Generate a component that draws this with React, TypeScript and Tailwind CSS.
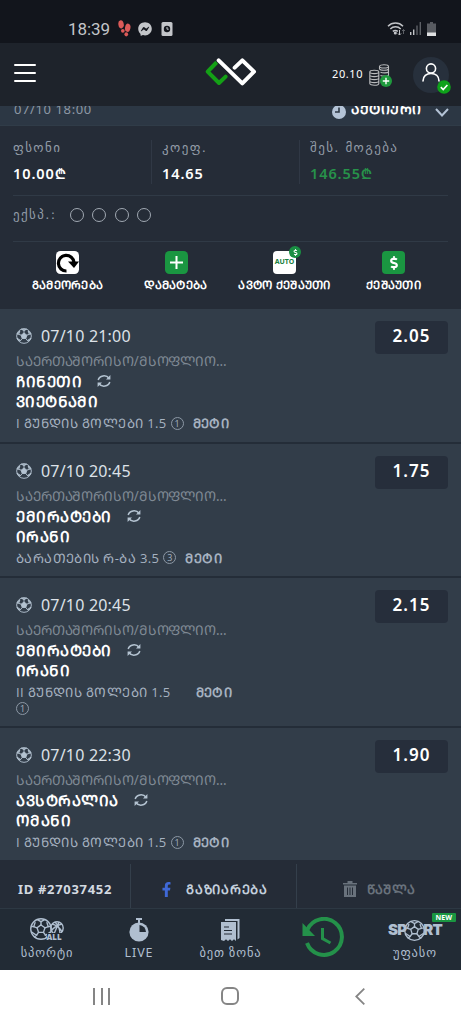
import type { ReactNode } from 'react';
import { FaFacebookF, FaFacebookMessenger, FaDollarSign } from 'react-icons/fa';

type Bet = {
  time: string;
  home: string;
  away: string;
  market: string;
  mark: string;
  odds: string;
  wrap?: boolean;
};

// text-transform leaves Georgian alone, so Mtavruli capitals are made here
const caps = (text: string) => text.toUpperCase();

const LEAGUE = 'საერთაშორისო/მსოფლიო...';

const bets: Bet[] = [
  { time: '07/10 21:00', home: 'ჩინეთი', away: 'ვიეტნამი', market: 'I გუნდის გოლები 1.5', mark: '1', odds: '2.05' },
  { time: '07/10 20:45', home: 'ემირატები', away: 'ირანი', market: 'ბარათების რ-ბა 3.5', mark: '3', odds: '1.75' },
  { time: '07/10 20:45', home: 'ემირატები', away: 'ირანი', market: 'II გუნდის გოლები 1.5', mark: '1', odds: '2.15', wrap: true },
  { time: '07/10 22:30', home: 'ავსტრალია', away: 'ომანი', market: 'I გუნდის გოლები 1.5', mark: '1', odds: '1.90' },
];

function Ball({ className }: { className?: string }) {
  return (
    <svg viewBox="0 0 24 24" className={className} fill="none" stroke="currentColor" strokeWidth="1.4">
      <circle cx="12" cy="12" r="11" />
      <path d="M12 7.6l4.3 3.1-1.6 5H9.3l-1.6-5z" fill="currentColor" />
      <path d="M12 7.6V4M16.3 10.7l3.6-1.2M14.7 15.7l2.3 3.1M9.3 15.7L7 18.8M7.7 10.7L4.1 9.5" />
      <path d="M8 1.8L12 4l4-2.2zM22.6 9l-2.7.5-1.6-5zM19.8 19.4l-2.8-.6 5.5-3.6zM4.2 19.4l2.8-.6-5.5-3.6zM1.4 9l2.7.5 1.6-5z" fill="currentColor" fillOpacity="0.6" />
    </svg>
  );
}

function OutlineBall({ className }: { className?: string }) {
  return (
    <svg viewBox="0 0 24 24" className={className} fill="none" stroke="currentColor" strokeWidth="1.5">
      <circle cx="12" cy="12" r="11.200" />
      <path d="M12 7.600l4.300 3.100-1.600 5H9.300l-1.600-5z" />
      <path d="M12 7.600V4M16.300 10.700l3.600-1.200M14.700 15.700l2.300 3.100M9.300 15.700L7 18.800M7.700 10.700L4.100 9.500" />
      <path d="M8 1.800L12 4l4-2.200M22.600 9l-2.700.5-1.600-5M19.800 21l-2.800-2.200 5.500-3.600M4.200 21L7 18.800l-5.500-3.600M1.400 9l2.700.5 1.600-5" />
    </svg>
  );
}

function Sync() {
  return (
    <svg viewBox="0 0 14 14" className="h-3.5 w-3.5 text-[#b4c3d1]" fill="none" stroke="currentColor" strokeWidth="1.5">
      <path d="M1.2 6A6 5.4 0 0 1 12 4.2M12.8 8A6 5.4 0 0 1 2 9.8" />
      <path d="M13.4 1v4.6H9zM.6 13V8.400H5z" fill="currentColor" stroke="none" />
    </svg>
  );
}

function StatusBar() {
  return (
    <div className="flex h-[43px] shrink-0 items-center bg-[#12151c] pt-[14px] pr-[25px] pl-[68px] text-[#c3c5c9]">
      <span className="w-[49px] font-[Roboto] text-[17px] leading-5 tracking-[-0.1px]">18:39</span>
      <svg viewBox="0 0 14 18" className="ml-px h-[17px] w-[13px]" fill="#dc5a58">
        <ellipse cx="3.300" cy="4.500" rx="2.900" ry="4.500" transform="rotate(-8 3.300 4.500)" />
        <ellipse cx="5.200" cy="11.500" rx="2" ry="2" />
        <ellipse cx="10.500" cy="8.200" rx="2.900" ry="4.500" transform="rotate(10 10.500 8.200)" />
        <ellipse cx="8.900" cy="15.300" rx="2" ry="2.200" />
      </svg>
      <FaFacebookMessenger className="ml-[7px] h-3.5 w-3.5" />
      <svg viewBox="0 0 12 14" className="ml-[9px] h-3.5 w-3">
        <rect width="11" height="14" x=".5" rx="1.500" fill="currentColor" />
        <circle cx="6" cy="7" r="3.200" fill="#12151c" />
        <path d="M6 5v2.200h1.700" stroke="#c3c5c9" fill="none" />
      </svg>
      <svg viewBox="0 0 19 15" className="ml-auto h-[15px] w-[19px]" fill="none" stroke="currentColor" strokeWidth="1.500">
        <path d="M1 5.200a10.500 10.500 0 0 1 15 0M3.300 8a7.200 7.200 0 0 1 10.400 0M5.800 10.400a4 4 0 0 1 5 0" />
        <circle cx="8.300" cy="12" r=".8" fill="currentColor" />
        <path d="M12.500 9v5M11 12.500l1.500 1.500 1.500-1.500" strokeWidth="1" />
        <path d="M16.500 13V8.500M15 10l1.500-1.500L18 10" strokeWidth="1" stroke="#5d6066" />
      </svg>
      <svg viewBox="0 0 13 13" className="ml-[3px] h-[13px] w-[13px]">
        <path d="M1 10h1.400v3H1zM4 7.500h1.400V13H4z" fill="currentColor" />
        <path d="M7.300 3.500h1.400V13H7.300zM10.600 0H12v13h-1.400z" fill="#5d6066" />
      </svg>
      <svg viewBox="0 0 9 14" className="ml-[5px] h-3.5 w-[9px]">
        <path d="M3 0h3v1.500h3V14H0V1.500h3z" fill="#585b61" />
        <path d="M0 10.500h9V14H0z" fill="#dfe0e2" />
      </svg>
    </div>
  );
}

function Header() {
  return (
    <header className="flex h-[63px] shrink-0 items-center bg-[#1e232b]">
      <div className="mb-[3px] ml-[14px] flex h-[18px] w-[22px] flex-col justify-between">
        <span className="h-0.5 rounded bg-white" />
        <span className="h-0.5 rounded bg-white" />
        <span className="h-0.5 rounded bg-white" />
      </div>
      <svg viewBox="39 36 168 90" className="mb-[5px] ml-[167px] h-[30px] w-[56px]" fill="none" strokeWidth="12" strokeLinecap="round" strokeLinejoin="round">
        <path d="M78 54L53 80l34 34 20-19" stroke="#14a016" />
        <path d="M86 46l71 69 35-35-35-34-23 22" stroke="#1e232b" strokeWidth="17" />
        <path d="M86 46l71 69 35-35-35-34-23 22" stroke="#fff" />
      </svg>
      <span className="ml-[73px] w-[33px] text-[11px] tracking-[0.6px] text-white">20.10</span>
      <div className="relative ml-[4px] h-[22px] w-6">
        <svg viewBox="0 0 24 22" className="h-[22px] w-6" fill="none" stroke="#b9bbbd" strokeWidth="1.100">
          <path d="M10.500 5V2.500c0-2.400 9-2.400 9 0V14M10.500 2.500c0 2 9 2 9 0M10.500 5c1 1.700 8 1.700 9 0M11.500 8.200c2 1 7 1 8-.3M11.500 11.400c2 1 7 1 8-.3" />
          <path d="M.8 8c0-2.400 9-2.400 9 0v11.500c0 2.400-9 2.400-9 0zM.8 8c0 2.100 9 2.100 9 0M.8 11c0 2.100 9 2.100 9 0M.8 14c0 2.100 9 2.100 9 0M.8 17c0 2.100 9 2.100 9 0" />
        </svg>
        <svg viewBox="0 0 12 12" className="absolute top-[11px] left-[11px] h-3 w-3">
          <circle cx="6" cy="6" r="6" fill="#1f9a3d" />
          <path d="M6 2.800v6.400M2.800 6h6.400" stroke="#fff" strokeWidth="1.400" />
        </svg>
      </div>
      <div className="relative ml-5 flex h-9 w-9 items-center justify-center rounded-full bg-[#27303c]">
        <svg viewBox="0 0 18 19" className="mb-1 h-[19px] w-[18px]" fill="none" stroke="#fff" strokeWidth="1.600" strokeLinecap="round">
          <circle cx="9" cy="5.500" r="4.600" />
          <path d="M1 18c0-5 3.500-7.500 8-7.500s8 2.500 8 7.500" />
        </svg>
        <svg viewBox="0 0 14 14" className="absolute top-[23px] left-[24px] h-3.5 w-3.5">
          <circle cx="7" cy="7" r="6.800" fill="#0ea21a" />
          <path d="M3.800 7.200L6.200 9.500l4.200-4.500" fill="none" stroke="#fff" strokeWidth="1.600" />
        </svg>
      </div>
    </header>
  );
}

function Stat({ label, value, className }: { label: string; value: string; className: string }) {
  return (
    <div className={className}>
      <div className="pt-px font-['DejaVu_Sans',sans-serif] text-[13px] leading-[14px] tracking-[1.4px] whitespace-nowrap text-[#939ca8]">{label}</div>
      <div className="mt-[11px] text-[14.5px] leading-[14px] font-semibold tracking-[0.9px]">{value}</div>
    </div>
  );
}

function Action({ label, className, children }: { label: string; className: string; children: ReactNode }) {
  return (
    <div className={`flex flex-col items-center ${className}`}>
      <div className="relative h-[23px] w-[23px]">{children}</div>
      <span className="mt-[3px] text-[11.5px] leading-4 font-bold tracking-[0.3px] whitespace-nowrap text-white">{caps(label)}</span>
    </div>
  );
}

function BetCard({ bet }: { bet: Bet }) {
  return (
    <div className={`flex justify-between border-[#242d38] bg-[#323d49] pr-[13px] pl-4 not-last:border-b-[2.5px] ${bet.wrap ? 'h-[150px]' : 'h-[134.5px] last:h-[132px]'}`}>
      <div className="pt-[15px]">
        <div className="flex h-6 items-center text-[16px] tracking-[0.2px] text-[#dde2e8]">
          <Ball className="mr-[9px] h-4 w-4 text-[#b4c3d1]" />
          {bet.time}
        </div>
        <div className="mt-[3px] text-[13.5px] leading-5 tracking-[-0.1px] whitespace-nowrap text-[#7f8994]">{caps(LEAGUE)}</div>
        <div className="flex items-center gap-[15px] text-[15px] leading-5 font-bold tracking-[0.5px] text-white">
          {caps(bet.home)}
          <Sync />
        </div>
        <div className="text-[15px] leading-5 font-bold tracking-[0.4px] text-white">{caps(bet.away)}</div>
        <div className="mt-[4px] flex font-['Open_Sans',sans-serif] text-[13px] leading-4 tracking-[0.4px] whitespace-nowrap text-[#a6b2c0]">
          <div className={bet.wrap ? 'mr-[25px]' : 'mr-[9px] flex gap-[4px]'}>
            <div>{caps(bet.market)}</div>
            <div className="flex h-4 items-center">
              <span className="flex h-[13px] w-[13px] items-center justify-center rounded-full border border-[#8c98a5] text-[9px] leading-none tracking-normal">{bet.mark}</span>
            </div>
          </div>
          <span className="font-bold">{caps('მეტი')}</span>
        </div>
      </div>
      <div className="mt-[12px] flex h-[33px] w-[73px] items-center justify-center rounded bg-[#262e3b] pb-[3px] text-[17px] font-semibold tracking-[1px] text-white">
        {bet.odds}
      </div>
    </div>
  );
}

function NavItem({ label, className, children }: { label: string; className: string; children: ReactNode }) {
  return (
    <div className={`flex flex-col items-center pt-[9px] text-[#b0bfd0] ${className}`}>
      <div className="flex h-6 items-center justify-center">{children}</div>
      <span className="mt-[3px] font-['Noto_Sans','DejaVu_Sans',sans-serif] text-[12.5px] leading-4 tracking-[0.9px] whitespace-nowrap">{label}</span>
    </div>
  );
}

export default function App() {
  return (
    <div className="flex h-[1024px] w-[461px] flex-col overflow-hidden bg-[#252c37] font-['Noto_Sans','DejaVu_Sans',sans-serif]">
      <StatusBar />
      <Header />

      {/* ticket header, scrolled half under the top bar */}
      <div className="flex h-5 shrink-0 items-end overflow-hidden border-b border-[#303c48] bg-[#2c3744] pb-[7px]">
        <span className="ml-[14px] text-[13px] leading-[18px] tracking-[0.6px] text-[#8c97a5]">07/10 18:00</span>
        <svg viewBox="0 0 14 14" className="mb-[-1px] ml-auto h-3.5 w-3.5">
          <circle cx="7" cy="7" r="7" fill="#b4c3d6" />
          <path d="M7 2.500V7H3" fill="none" stroke="#2c3744" strokeWidth="1.600" />
        </svg>
        <span className="ml-[5px] w-[71px] text-[14px] leading-[18px] font-bold tracking-[0.5px] whitespace-nowrap text-white">{caps('აქტიური')}</span>
        <svg viewBox="0 0 14 9" className="mr-[12px] mb-[1px] ml-[13px] h-[9px] w-3.5 shrink-0" fill="none" stroke="#b4c3d6" strokeWidth="2">
          <path d="M1 1l6 6.500L13 1" />
        </svg>
      </div>

      {/* ticket summary */}
      <div className="h-[183px] shrink-0 px-[13px] pt-[14px]">
        <div className="flex h-11">
          <Stat label="ფსონი" value="10.00₾" className="w-[139px] border-r border-[#303845] text-white" />
          <Stat label="კოეფ." value="14.65" className="w-[148px] border-r border-[#303845] pl-[10px] text-white" />
          <Stat label="შეს. მოგება" value="146.55₾" className="pl-[10px] text-[#27924a]" />
        </div>
        <div className="mt-[11px] flex h-[47px] items-center gap-[8.5px] border-y border-[#303a46] pb-[8px]">
          <span className="w-[48px] font-['DejaVu_Sans',sans-serif] text-[13px] tracking-[1.4px] whitespace-nowrap text-[#939ca8]">ექსპ.:</span>
          {[0, 1, 2, 3].map(i => (
            <span key={i} className="h-3.5 w-3.5 rounded-full border border-[#a0a8b2]" />
          ))}
        </div>
        <div className="flex pt-[9px]">
          <Action label="გამეორება" className="w-[109px]">
            <svg viewBox="0 0 23 23" className="h-[23px] w-[23px]">
              <rect width="23" height="23" rx="4.500" fill="#fff" />
              <path d="M10.500 20A7.800 7.800 0 1 1 18 11.500" fill="none" stroke="#000" strokeWidth="3.200" />
              <path d="M12 10.500h11l-5 6.500z" fill="#000" />
            </svg>
          </Action>
          <Action label="დამატება" className="w-[108px]">
            <svg viewBox="0 0 23 23" className="h-[23px] w-[23px]">
              <rect width="23" height="23" rx="4.500" fill="#1a9641" />
              <path d="M11.500 5v13M5 11.500h13" stroke="#fff" strokeWidth="2" />
            </svg>
          </Action>
          <Action label="ავტო ქეშაუთი" className="w-[109px]">
            <div className="flex h-[23px] w-[23px] items-center justify-center rounded bg-white text-[7px] font-bold text-[#1a8040]">AUTO</div>
            <div className="absolute -top-[5px] left-4 flex h-3 w-3 items-center justify-center rounded-full bg-[#1a8f43] text-white">
              <FaDollarSign size={7} />
            </div>
          </Action>
          <Action label="ქეშაუთი" className="w-[109px]">
            <div className="flex h-[23px] w-[23px] items-center justify-center rounded bg-[#1a9641] text-white">
              <FaDollarSign size={14} />
            </div>
          </Action>
        </div>
      </div>

      <div className="h-[552px] shrink-0">
        {bets.map((bet, i) => (
          <BetCard key={i} bet={bet} />
        ))}
      </div>

      {/* ticket actions */}
      <div className="flex h-[47px] shrink-0 pt-[3px] text-[13px] leading-5">
        <div className="flex w-[130px] items-center justify-center pt-[6px] font-bold tracking-[0.7px] text-[#d3d9e0]">ID #27037452</div>
        <div className="flex w-[167px] items-center justify-center gap-3 border-x border-[#343f4b] pt-[6px] font-bold tracking-[0.7px] text-[#c3cfdc]">
          <FaFacebookF size={15} color="#3f68d6" />
          {caps('გაზიარება')}
        </div>
        <div className="flex flex-1 items-center justify-center gap-[10px] pt-[6px] font-bold tracking-[0.4px] text-[#69727c]">
          <svg viewBox="0 0 14 16" className="h-4 w-3.5" fill="currentColor">
            <path d="M0 2h4.500V0h5v2H14v1.500H0zM1 4.500h12V16H1zM4 6.500v7.500h1V6.500zM6.500 6.500v7.500h1V6.500zM9 6.500v7.500h1V6.500z" fillRule="evenodd" />
          </svg>
          {caps('წაშლა')}
        </div>
      </div>

      <nav className="flex h-[62px] shrink-0 border-t border-[#2d3843] bg-[#222b35]">
        <NavItem label="სპორტი" className="w-[94px]">
          <div className="relative h-6 w-[35px]">
            <OutlineBall className="h-[22px] w-[22px]" />
            <svg viewBox="0 0 14 14" className="absolute top-[3px] left-[20px] h-3.5 w-3.5" fill="none" stroke="currentColor" strokeWidth="1.400">
              <circle cx="7" cy="7" r="6.200" />
              <path d="M9 1L4 13M2 3c4 1 8 4 10 8M12 3C8 4 4 6 1 10M5 1c3 3 5 7 5 12" />
            </svg>
            <span className="absolute top-[15px] left-[17px] bg-[#222b35] text-[8px] leading-[8px] font-black">ALL</span>
          </div>
        </NavItem>
        <NavItem label="LIVE" className="w-[90px]">
          <svg viewBox="0 0 20 24" className="h-6 w-5" fill="currentColor">
            <path d="M7 0h6v2h-2v3H9V2H7z" />
            <circle cx="10" cy="14" r="9.600" />
            <path d="M10.500 7v7H17a7 7 0 0 0-6.500-7z" fill="#222b35" />
          </svg>
        </NavItem>
        <NavItem label="ბეთ ზონა" className="w-[93px]">
          <svg viewBox="0 0 19 23" className="h-[23px] w-[19px]" fill="currentColor">
            <path d="M4 0h14.500v19l-2 1.500V2H4z" />
            <path d="M0 3h15v19l-2-1.700L11 22l-2-1.700L7 22l-2-1.700L3 22l-3-1z" />
            <path d="M3 8h5M3 11.500h8M3 15h8" stroke="#222b35" strokeWidth="1.200" />
          </svg>
        </NavItem>
        <div className="flex w-[92px] justify-center pt-[8px]">
          <svg viewBox="0 0 42 40" className="h-10 w-[42px]" fill="none" stroke="#24914a" strokeWidth="4">
            <path d="M5.500 12.500A18 18 0 1 1 5 26" />
            <path d="M20.500 11v10.500l8 4.500" strokeWidth="3" />
            <path d="M.5 6v13H13z" fill="#24914a" stroke="none" />
          </svg>
        </div>
        <NavItem label="უფასო" className="relative w-[92px]">
          <div className="flex items-center text-[#b0bfd0]">
            <span className="font-[Inter] text-[15px] leading-3 font-black tracking-[-0.8px]">SP</span>
            <OutlineBall className="-ml-0.5 h-[21px] w-[21px]" />
            <span className="-ml-0.5 font-[Inter] text-[15px] leading-3 font-black tracking-[-0.8px]">RT</span>
          </div>
          <span className="absolute top-[4px] right-[5px] rounded-[1px] bg-[#1a9641] px-[4px] text-[7px] leading-[9px] font-bold text-white">NEW</span>
        </NavItem>
      </nav>

      {/* system navigation */}
      <div className="flex h-[54px] shrink-0 items-center bg-white pb-0.5 text-[#858585]">
        <div className="ml-[93px] flex h-[17px] w-[17px] justify-between">
          <span className="w-0.5 bg-[#858585]" />
          <span className="w-0.5 bg-[#858585]" />
          <span className="w-0.5 bg-[#858585]" />
        </div>
        <div className="ml-[111px] h-[18px] w-[18px] rounded-[6px] border-2 border-[#858585]" />
        <svg viewBox="0 0 10 17" className="ml-[116px] h-[17px] w-2.5" fill="none" stroke="currentColor" strokeWidth="1.800">
          <path d="M9.300.7L1.300 8.500l8 7.800" />
        </svg>
      </div>
    </div>
  );
}
